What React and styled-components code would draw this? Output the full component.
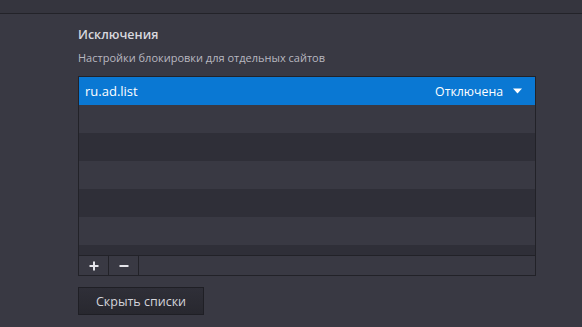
import React from 'react';
import styled, { createGlobalStyle } from 'styled-components';

const GlobalStyle = createGlobalStyle`
    html, body {
        margin: 0;
        padding: 0;
        background: #393943;
        font-family: "Open Sans", "Noto Sans", sans-serif;
    }
`;

const Page = styled.div`
    width: 582px;
    height: 327px;
    overflow: hidden;
    background: #393943;
`;

const TopBar = styled.div`
    height: 13px;
    background: #35353e;
    border-bottom: 1px solid #232329;
`;

const Section = styled.section`
    padding: 12px 0 0 78px;
    width: 458px;
`;

const Title = styled.h3`
    margin: 0;
    font-size: 12.5px;
    font-weight: 600;
    line-height: 18px;
    color: #d8d8de;
`;

const Subtitle = styled.p`
    margin: 6px 0 0;
    font-size: 11px;
    line-height: 16px;
    color: #b8b8c0;
`;

const Table = styled.div`
    margin-top: 10px;
    border: 1px solid #222228;
    display: flex;
    flex-direction: column;
`;

const Rows = styled.div`
    height: 178px;
    overflow: hidden;
`;

const Row = styled.div`
    height: 28px;
    display: flex;
    align-items: center;
    justify-content: space-between;
    padding: 0 13px 0 6px;
    background: ${p => (p.$selected ? '#0a78d3' : p.$odd ? '#2f2f38' : '#393943')};
    color: #fff;
    font-size: 13px;
`;

const Status = styled.span`
    display: flex;
    align-items: center;
    gap: 10px;
    font-size: 12.3px;
`;

const Toolbar = styled.div`
    display: flex;
    height: 19px;
    border-top: 1px solid #222228;
`;

const ToolButton = styled.button`
    width: 30px;
    height: 19px;
    padding: 0;
    border: none;
    border-right: 1px solid #222228;
    background: transparent;
    color: #e4e4ea;
    display: flex;
    align-items: center;
    justify-content: center;
`;

const Button = styled.button`
    margin-top: 11px;
    width: 126px;
    height: 28px;
    border: 1px solid #1f1f25;
    background: linear-gradient(#2f2f38, #28282f);
    color: #d4d4da;
    font-family: inherit;
    font-size: 12.5px;
    padding: 0;
`;

const Caret = () => (
    <svg width="9" height="6" viewBox="0 0 9 6">
        <path d="M0 0.5h9L4.5 5.5z" fill="#fff" />
    </svg>
);

const Plus = () => (
    <svg width="10" height="10" viewBox="0 0 10 10">
        <path d="M5 0.5v9M0.5 5h9" stroke="#e4e4ea" strokeWidth="2" />
    </svg>
);

const Minus = () => (
    <svg width="10" height="10" viewBox="0 0 10 10">
        <path d="M0.5 5h9" stroke="#e4e4ea" strokeWidth="2" />
    </svg>
);

export default function App() {
    const empty = [1, 2, 3, 4, 5, 6];
    return (
        <Page>
            <GlobalStyle />
            <TopBar />
            <Section>
                <Title>Исключения</Title>
                <Subtitle>Настройки блокировки для отдельных сайтов</Subtitle>
                <Table>
                    <Rows>
                        <Row $selected>
                            <span>ru.ad.list</span>
                            <Status>
                                Отключена
                                <Caret />
                            </Status>
                        </Row>
                        {empty.map(i => (
                            <Row key={i} $odd={i % 2 === 0} />
                        ))}
                    </Rows>
                    <Toolbar>
                        <ToolButton><Plus /></ToolButton>
                        <ToolButton><Minus /></ToolButton>
                    </Toolbar>
                </Table>
                <Button>Скрыть списки</Button>
            </Section>
        </Page>
    );
}
